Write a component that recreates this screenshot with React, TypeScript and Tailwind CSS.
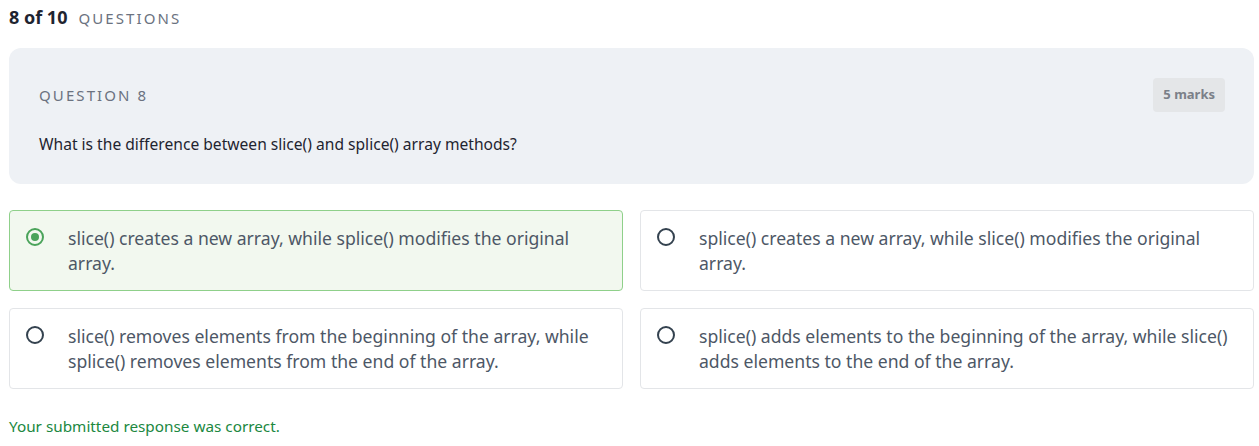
import React from "react";

const options = [
  {
    text: "slice() creates a new array, while splice() modifies the original array.",
    selected: true,
  },
  {
    text: "splice() creates a new array, while slice() modifies the original array.",
    selected: false,
  },
  {
    text: "slice() removes elements from the beginning of the array, while splice() removes elements from the end of the array.",
    selected: false,
  },
  {
    text: "splice() adds elements to the beginning of the array, while slice() adds elements to the end of the array.",
    selected: false,
  },
];

const Radio = ({ checked }: { checked: boolean }) => (
  <svg width="20" height="20" viewBox="0 0 20 20" className="shrink-0 mt-[1px]">
    {checked ? (
      <>
        <circle cx="10" cy="10" r="8" fill="none" stroke="#4aa35a" strokeWidth="2" />
        <circle cx="10" cy="10" r="4" fill="#4aa35a" />
      </>
    ) : (
      <circle cx="10" cy="10" r="8" fill="none" stroke="#34424f" strokeWidth="2" />
    )}
  </svg>
);

const App = () => {
  return (
    <div className="pl-[9px] pr-[5px] pt-[4px] font-['Noto_Sans',_sans-serif] bg-white min-h-[446px]">
      {/* Header */}
      <div className="flex items-baseline gap-[11px] h-[26px]">
        <span className="text-[18px] font-bold text-[#1f2430]">8 of 10</span>
        <span className="text-[15px] tracking-[0.14em] text-[#6b7280]">QUESTIONS</span>
      </div>

      {/* Question card */}
      <div className="mt-[18px] rounded-[12px] bg-[#eef1f5] px-[30px] pt-[30px] pb-[29px]">
        <div className="flex items-center justify-between h-[34px]">
          <span className="text-[15px] tracking-[0.14em] text-[#6b7280]">QUESTION 8</span>
          <span className="rounded-[4px] bg-[#e4e6e8] px-[10px] h-[34px] flex items-center text-[13px] font-bold text-[#7b8088] mr-[-1px]">
            5 marks
          </span>
        </div>
        <p className="mt-[21px] text-[15.6px] leading-[22px] text-[#1f2430]">
          What is the difference between slice() and splice() array methods?
        </p>
      </div>

      {/* Options */}
      <div className="mt-[26px] grid grid-cols-2 gap-[17px]">
        {options.map((o, i) => (
          <div
            key={i}
            className={`flex gap-[23px] rounded-[4px] border pl-[15px] pr-[20px] pt-[15px] pb-[14px] ${
              o.selected ? "border-[#8fd08a] bg-[#f2f8ef]" : "border-[#e3e5e8] bg-white"
            }`}
          >
            <Radio checked={o.selected} />
            <p className="text-[17.6px] leading-[25px] text-[#4d5766]">{o.text}</p>
          </div>
        ))}
      </div>

      {/* Result */}
      <p className="mt-[26px] text-[15.3px] leading-[22px] text-[#20883f]">
        Your submitted response was correct.
      </p>
    </div>
  );
};

export default App;
